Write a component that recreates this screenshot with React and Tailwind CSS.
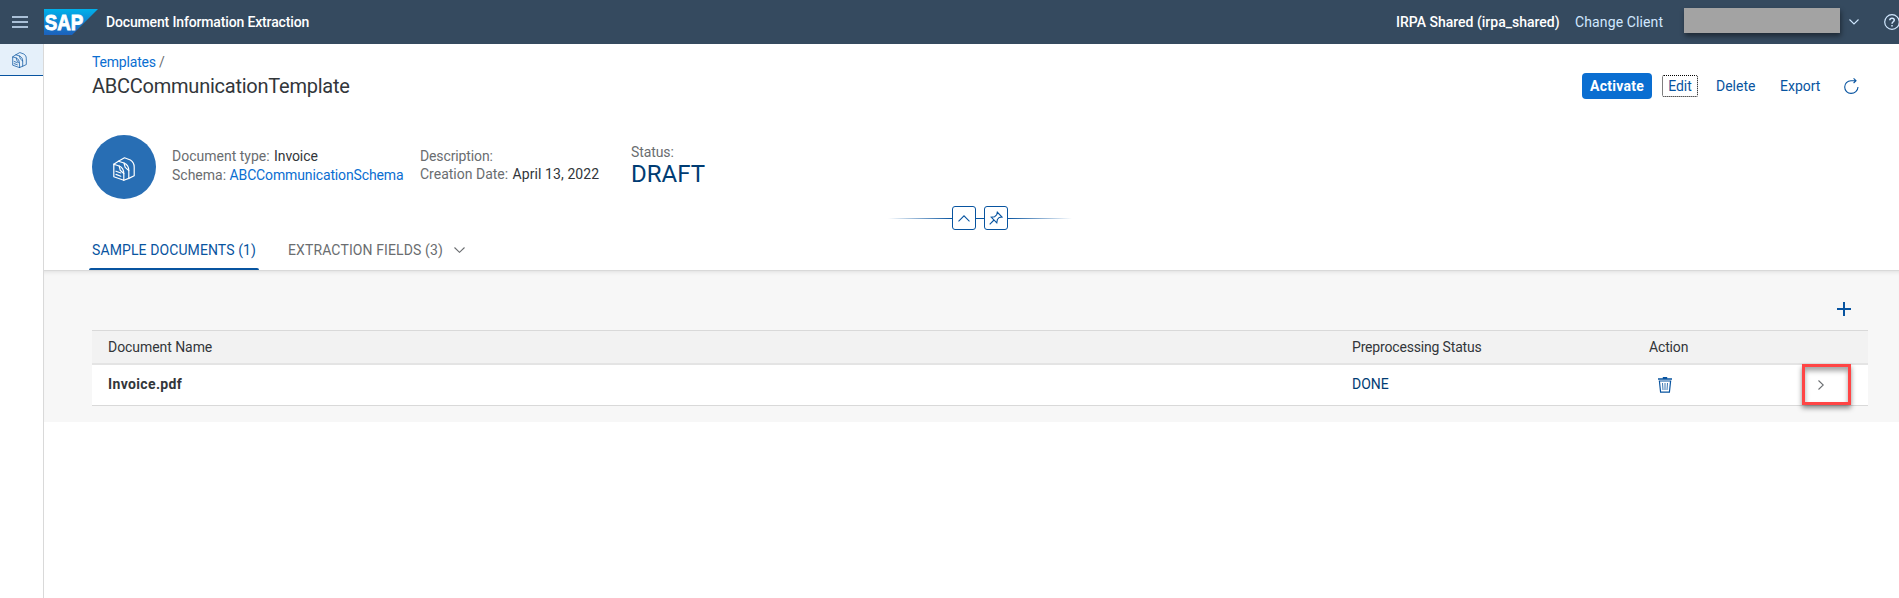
function TemplateIcon({ className, strokeWidth = 1.1 }) {
  return (
    <svg viewBox="0 0 22 24" className={className} fill="none" stroke="currentColor" strokeWidth={strokeWidth} strokeLinejoin="round" strokeLinecap="round">
      <path d="M10.8 23.3L0.8 19.8V7.2L6.2 9C9 10.2 10.8 12.5 10.8 16.5Z" />
      <path d="M0.8 7.2L5.4 4.2L11 6C13.8 7.2 15.8 9.5 15.8 13.5V21.4L10.8 23.3" />
      <path d="M5.4 4.2L11.5 0.8L17.4 3C20 4.6 21.2 6.6 21.2 10V18.8L15.8 21.4" />
      <path d="M6.2 9L7.2 13.2L10.8 16.5M11 6L12.2 10.4L15.8 13.5" />
      <path d="M3 14.2L7.8 16M3 17.4L7.8 19.2" />
    </svg>
  );
}

function Chevron({ className, d, viewBox }) {
  return (
    <svg viewBox={viewBox} className={className} fill="none" stroke="currentColor" strokeWidth="1.1">
      <path d={d} />
    </svg>
  );
}

function SapLogo() {
  return (
    <svg viewBox="0 0 54 26" className="ml-4 h-[26px] w-[54px]">
      <defs>
        <linearGradient id="sap" x1="0" y1="0" x2="0" y2="1">
          <stop offset="0" stopColor="#00b1eb" />
          <stop offset="0.5" stopColor="#1085d2" />
          <stop offset="1" stopColor="#1d61bc" />
        </linearGradient>
      </defs>
      <path d="M0 0H54L28 26H0Z" fill="url(#sap)" />
      <text x="0.8" y="20.6" textLength="38.5" lengthAdjust="spacingAndGlyphs" fontFamily="Liberation Sans, sans-serif" fontWeight="700" fontSize="21.5" fill="#fff" stroke="#fff" strokeWidth="0.9">SAP</text>
    </svg>
  );
}

function ShellBar() {
  return (
    <header className="flex h-11 shrink-0 items-center overflow-hidden bg-[#354a5f] pl-3 text-white">
      <svg viewBox="0 0 16 12" className="h-3 w-4" stroke="#d1e8ff" strokeWidth="1.6">
        <path d="M0 1H16M0 6H16M0 11H16" />
      </svg>
      <SapLogo />
      <span className="ml-2 font-medium tracking-[-0.15px]">Document Information Extraction</span>
      <div className="ml-auto flex shrink-0 items-center">
        <span className="w-[179px] font-medium">IRPA Shared (irpa_shared)</span>
        <span className="w-[109px] tracking-[0.12px] text-[#d1e8ff]">Change Client</span>
        <span className="-mt-[3px] h-[25px] w-[156px] bg-[#a3a3a3] shadow-[1px_3px_5px_rgba(0,0,0,0.45)]" />
        <Chevron className="ml-[9px] h-[6px] w-[10px] text-[#d1e8ff]" viewBox="0 0 10 6" d="M0.5 0.5L5 5L9.5 0.5" />
        <svg viewBox="0 0 16 16" className="-mr-px ml-[25px] h-4 w-4" fill="none" stroke="#d1e8ff" strokeWidth="1.2">
          <circle cx="8" cy="8" r="7.3" />
          <path strokeWidth="1.5" d="M5.8 6.3C5.8 3.4 10.3 3.5 10.3 6.1C10.3 7.8 8 7.8 8 9.8M8 11V12.6" />
        </svg>
      </div>
    </header>
  );
}

function SideNav() {
  return (
    <nav className="w-11 shrink-0 border-r border-[#d9d9d9]">
      <div className="flex h-8 items-center justify-center border-b border-[#0854a0] bg-[#e5f0fa] pr-1 text-[#0854a0]">
        <TemplateIcon className="h-4 w-[15px]" strokeWidth={1.1} />
      </div>
    </nav>
  );
}

function TitleBar() {
  return (
    <div className="flex h-[54px] items-end justify-between">
      <div className="flex flex-col gap-0.5">
        <div className="flex gap-[3px]">
          <a className="tracking-[-0.18px] text-[#0a6ed1]">Templates</a>
          <span className="text-[#6a6d70]">/</span>
        </div>
        <h1 className="text-[20px] leading-6 tracking-[-0.24px] text-[#32363a]">ABCCommunicationTemplate</h1>
      </div>
      <div className="mb-[-1px] flex h-[26px] items-center text-[#0854a0]">
        <button className="h-[26px] w-[70px] rounded-[4px] bg-[#0a6ed1] font-bold tracking-[0.25px] text-white">Activate</button>
        <button className="ml-[10px] h-[22px] w-9 rounded-[2px] border border-dotted border-black leading-5">Edit</button>
        <button className="ml-[18px] w-16 text-left">Delete</button>
        <button className="w-16 text-left">Export</button>
        <svg viewBox="0 0 15 16" className="mr-10 h-4 w-[15px]" fill="none" stroke="currentColor" strokeWidth="1.1">
          <path d="M11.6 2.7H7C3.3 2.7 0.7 5.7 0.7 9C0.7 12.5 3.5 15.4 7 15.4C10.8 15.4 13.8 12.8 14 9M9.6 0.4L12 2.7L9.6 5" />
        </svg>
      </div>
    </div>
  );
}

function Facets() {
  return (
    <div className="mt-[37px] flex h-16 text-[#6a6d70]">
      <div className="flex h-16 w-16 items-center justify-center rounded-full bg-[#286eb4] pt-1 text-white">
        <TemplateIcon className="h-6 w-[22px]" strokeWidth={1.2} />
      </div>
      <div className="ml-4 w-[248px] pt-[11px]">
        <p>Document type: <span className="ml-px tracking-[-0.1px] text-[#32363a]">Invoice</span></p>
        <p className="-mt-px">Schema: <a className="tracking-[-0.13px] text-[#0a6ed1]">ABCCommunicationSchema</a></p>
      </div>
      <div className="w-[211px] pt-[11px]">
        <p className="tracking-[-0.12px]">Description:</p>
        <p className="-mt-0.5">Creation Date: <span className="ml-px tracking-[0.08px] text-[#32363a]">April 13, 2022</span></p>
      </div>
      <div className="pt-[7px]">
        <p className="tracking-[-0.1px]">Status:</p>
        <p className="-mt-0.5 text-[24px] leading-7 text-[#003c73]">DRAFT</p>
      </div>
    </div>
  );
}

function HeaderToggle() {
  return (
    <div className="mt-[7px] flex h-6 items-center pl-[796px] text-[#0854a0]">
      <span className="h-px w-16 bg-linear-to-l from-[#0854a0] to-transparent" />
      <button className="flex h-6 w-6 items-center justify-center rounded-[3px] border border-[#0854a0]">
        <Chevron className="h-[7px] w-3" viewBox="0 0 12 7" d="M0.5 6.3L6 0.8L11.5 6.3" />
      </button>
      <span className="h-px w-2 bg-[#0854a0]" />
      <button className="flex h-6 w-6 items-center justify-center rounded-[3px] border border-[#0854a0]">
        <svg viewBox="0 0 14 14" className="h-[14px] w-[14px]" fill="none" stroke="currentColor" strokeWidth="1.1">
          <path d="M0.7 13.3L5 9M2.2 6.2L7.8 11.8L8.4 8.4L10.2 6.4L13 6L8.3 1.1L7.7 3.8L5.6 5.7Z" />
        </svg>
      </button>
      <span className="h-px w-16 bg-linear-to-r from-[#0854a0] to-transparent" />
    </div>
  );
}

function Tabs() {
  return (
    <div className="-ml-[3px] flex h-10 items-end">
      <div className="h-[30px] w-[170px] pl-[3px] text-[#0854a0]">
        <span className="block h-7 tracking-[0.1px]">SAMPLE DOCUMENTS (1)</span>
        <span className="block h-0.5 -ml-[3px] rounded-t-[2px] bg-[#0854a0]" />
      </div>
      <div className="flex h-[30px] items-start pl-[29px] text-[#6a6d70]">
        <span className="w-[166px] tracking-[0.12px]">EXTRACTION FIELDS (3)</span>
        <Chevron className="mt-[7px] h-[6px] w-[11px]" viewBox="0 0 11 6" d="M0.5 0.5L5.5 5.3L10.5 0.5" />
      </div>
    </div>
  );
}

function DocumentTable() {
  return (
    <section className="h-[151px] bg-[#f7f7f7] pt-[31px] pr-[31px] pl-12 shadow-[inset_0_4px_4px_-3px_rgba(0,0,0,0.1)]">
      <div className="flex h-7 justify-end pr-[17px]">
        <svg viewBox="0 0 14 14" className="h-[14px] w-[14px]" stroke="#0854a0" strokeWidth="2">
          <path d="M0 7H14M7 0V14" />
        </svg>
      </div>
      <div className="grid h-[35px] grid-cols-[1244px_297px_1fr] items-center border-t border-b-2 border-t-[#d9d9d9] border-b-[#e4e4e4] bg-[#f2f2f2] pl-4 text-[#32363a]">
        <span className="tracking-[-0.06px]">Document Name</span>
        <span className="tracking-[-0.17px]">Preprocessing Status</span>
        <span className="tracking-[-0.15px]">Action</span>
      </div>
      <div className="grid h-[41px] grid-cols-[1244px_306px_1fr] items-center border-b border-[#d9d9d9] bg-white pl-4 text-[#32363a]">
        <span className="-mt-0.5 font-bold tracking-[0.36px]">Invoice.pdf</span>
        <span className="-mt-0.5 text-[#003c73]">DONE</span>
        <div className="flex items-center">
          <svg viewBox="0 0 14 16" className="h-4 w-[14px]" fill="none" stroke="#0854a0">
            <path strokeWidth="1.4" d="M0 2H14M4.8 0.7H9.2" />
            <path strokeWidth="1.2" d="M1.4 4L2.6 15.2H11.4L12.6 4Z" />
            <path strokeWidth="0.8" d="M4.5 6L5 13M7 6V13M9.5 6L9 13" />
          </svg>
          <span className="-mt-px ml-[130px] flex h-[41px] w-[49px] items-center border-3 border-[#ff4545] pl-[13px] text-[#6a6d70] shadow-[0_3px_5px_rgba(0,0,0,0.45),inset_0_4px_5px_rgba(0,0,0,0.35)]">
            <Chevron className="h-[10px] w-[6px]" viewBox="0 0 6 10" d="M0.5 0.5L5.3 5L0.5 9.5" />
          </span>
        </div>
      </div>
    </section>
  );
}

export default function App() {
  return (
    <div className="flex h-screen flex-col overflow-hidden bg-white font-['Roboto',sans-serif] text-[14px] leading-5">
      <ShellBar />
      <div className="flex min-h-0 flex-1">
        <SideNav />
        <main className="min-w-0 flex-1">
          <div className="border-b border-[#d9d9d9] pl-12">
            <TitleBar />
            <Facets />
            <HeaderToggle />
            <Tabs />
          </div>
          <DocumentTable />
        </main>
      </div>
    </div>
  );
}
